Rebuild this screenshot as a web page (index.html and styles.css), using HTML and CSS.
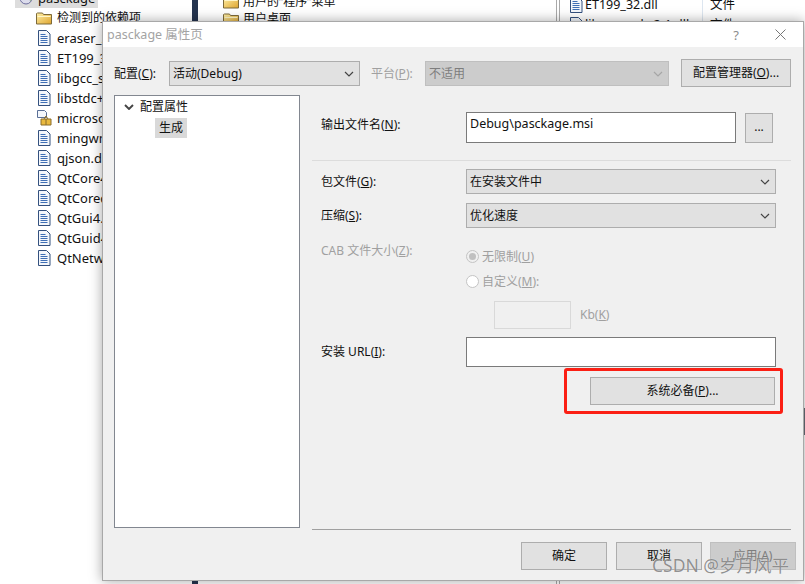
FILE: index.html
```html
<!DOCTYPE html>
<html lang="zh-CN">
<head>
<meta charset="utf-8">
<title>pasckage 属性页</title>
<link rel="stylesheet" href="styles.css">
</head>
<body>
<svg class="defs" width="0" height="0" aria-hidden="true">
  <defs>
    <linearGradient id="folderFill" x1="0" y1="0" x2="1" y2="1"><stop offset="0" stop-color="#fff0a8"/><stop offset="1" stop-color="#dfa52e"/></linearGradient>
    <symbol id="doc" viewBox="0 0 14 16">
      <path d="M1.5.5h8l3.5 3.5v11.500h-11.500z" fill="#f4f7fc" stroke="#33507e"/>
      <path d="M3.500 4.500h5M3.500 6.500h7M3.500 8.500h7M3.500 10.500h7M3.500 12.500h7" stroke="#3f6fb5" fill="none"/>
    </symbol>
    <symbol id="folder" viewBox="0 0 16 14">
      <path d="M.5 2.500v10.500h15v-9.500h-8l-1-1.500h-5z" fill="url(#folderFill)" stroke="#7d6a3a"/>
      <path d="M1.500 5.500h13" stroke="#fff6c9" fill="none"/>
    </symbol>
    <symbol id="chev" viewBox="0 0 10 6">
      <path d="M1 1l4 4 4-4" fill="none" stroke="currentColor"/>
    </symbol>
  </defs>
</svg>

<div class="win win-left">
  <div class="tree-top"><svg class="ic-pkg" viewBox="0 0 16 14"><circle cx="8" cy="7" r="6" fill="#dcdcec" stroke="#6d6d9c"/><path d="M8 7l5-3v6z" fill="#7fb36a"/></svg><span>pasckage</span></div>
  <div class="file folder-row"><svg class="ic-folder"><use href="#folder"/></svg><span>检测到的依赖项</span></div>
  <div class="file"><svg class="ic-doc"><use href="#doc"/></svg><span>eraser_2</span></div>
  <div class="file"><svg class="ic-doc"><use href="#doc"/></svg><span>ET199_32</span></div>
  <div class="file"><svg class="ic-doc"><use href="#doc"/></svg><span>libgcc_s_</span></div>
  <div class="file"><svg class="ic-doc"><use href="#doc"/></svg><span>libstdc++</span></div>
  <div class="file merge-row"><svg class="ic-merge" viewBox="0 0 16 16"><path d="M1.500.5h7l2 2v5h-9z" fill="#f4f7fc" stroke="#5a6f96"/><path d="M5 9h10v6H5z" fill="#e9b93f" stroke="#8a6d2a"/><path d="M8 9l2-3 2 3M10 9v6" fill="none" stroke="#8a6d2a"/></svg><span>microsoft</span></div>
  <div class="file"><svg class="ic-doc"><use href="#doc"/></svg><span>mingwm10</span></div>
  <div class="file"><svg class="ic-doc"><use href="#doc"/></svg><span>qjson.dll</span></div>
  <div class="file"><svg class="ic-doc"><use href="#doc"/></svg><span>QtCore4.dll</span></div>
  <div class="file"><svg class="ic-doc"><use href="#doc"/></svg><span>QtCored4</span></div>
  <div class="file"><svg class="ic-doc"><use href="#doc"/></svg><span>QtGui4.dll</span></div>
  <div class="file"><svg class="ic-doc"><use href="#doc"/></svg><span>QtGuid4</span></div>
  <div class="file"><svg class="ic-doc"><use href="#doc"/></svg><span>QtNetwork</span></div>
</div>

<div class="win win-mid">
  <div class="mid-row"><svg class="ic-folder"><use href="#folder"/></svg><span>用户的“程序”菜单</span></div>
  <div class="mid-row"><svg class="ic-folder"><use href="#folder"/></svg><span>用户桌面</span></div>
</div>

<div class="win win-right">
  <div class="right-row"><svg class="ic-doc"><use href="#doc"/></svg><span class="right-name">ET199_32.dll</span><span>文件</span></div>
  <div class="right-row"><svg class="ic-doc"><use href="#doc"/></svg><span class="right-name">libgcc_s_dw2-1.dll</span><span>文件</span></div>
</div>
<div class="edge-mark"></div>

<div class="dialog">
  <div class="titlebar">
    <span class="title-text">pasckage 属性页</span>
    <span class="title-help">?</span>
    <svg class="title-close" viewBox="0 0 11 11"><path d="M.5.5l10 10M10.500.5l-10 10" stroke="#777" fill="none"/></svg>
  </div>
  <div class="body">
    <div class="config-row">
      <span class="cfg-label">配置(<u>C</u>):</span>
      <div class="select cfg-select"><span>活动(Debug)</span><svg class="chev"><use href="#chev"/></svg></div>
      <span class="cfg-label platform disabled">平台(<u>P</u>):</span>
      <div class="select plat-select is-disabled"><span>不适用</span><svg class="chev"><use href="#chev"/></svg></div>
      <div class="btn cfg-btn">配置管理器(<u>O</u>)...</div>
    </div>
    <div class="main">
      <div class="tree">
        <div class="tree-root"><svg class="tree-chev"><use href="#chev"/></svg><span>配置属性</span></div>
        <div class="tree-child"><span>生成</span></div>
      </div>
      <div class="panel">
        <div class="output">
          <span class="label out-label">输出文件名(<u>N</u>):</span>
          <div class="input out-input">Debug\pasckage.msi</div>
          <div class="btn browse">...</div>
        </div>
        <div class="form">
          <span class="label">包文件(<u>G</u>):</span>
          <div class="select"><span>在安装文件中</span><svg class="chev"><use href="#chev"/></svg></div>
          <span class="label">压缩(<u>S</u>):</span>
          <div class="select"><span>优化速度</span><svg class="chev"><use href="#chev"/></svg></div>
          <span class="label cab disabled">CAB 文件大小(<u>Z</u>):</span>
          <div class="cab-options disabled">
            <div class="radio-row"><span class="radio checked"></span><span>无限制(<u>U</u>)</span></div>
            <div class="radio-row"><span class="radio"></span><span>自定义(<u>M</u>):</span></div>
            <div class="size-row"><div class="size-input"></div><span>Kb(<u>K</u>)</span></div>
          </div>
          <span class="label url-label">安装 URL(<u>I</u>):</span>
          <div class="input url-input"></div>
          <div class="prereq-wrap">
            <div class="btn prereq">系统必备(<u>P</u>)...</div>
            <div class="highlight"></div>
          </div>
        </div>
      </div>
    </div>
    <div class="footer">
      <div class="btn foot-btn">确定</div>
      <div class="btn foot-btn">取消</div>
      <div class="btn foot-btn is-disabled">应用(<u>A</u>)</div>
    </div>
  </div>
</div>
<div class="watermark">CSDN @岁月风平</div>
</body>
</html>
```

FILE: styles.css
```css
* { box-sizing: border-box; }
html, body { margin: 0; height: 100%; }
body {
  position: relative;
  width: 805px;
  height: 584px;
  overflow: hidden;
  background: #fff;
  color: #111;
  font: 12px/16px "Noto Sans", "Noto Sans CJK SC", sans-serif;
}
u { text-underline-offset: 1px; }
.defs { position: absolute; }
.ic-doc { width: 14px; height: 16px; flex: none; }
.ic-folder { width: 16px; height: 14px; flex: none; }
.ic-merge { width: 16px; height: 16px; flex: none; }
.ic-pkg { width: 16px; height: 14px; flex: none; }

/* background windows */
.win { position: absolute; }
.win-left { left: 0; top: -12px; width: 192px; height: 596px; background: #fff; font-size: 13px; }
.tree-top {
  display: flex; align-items: center; gap: 4px;
  margin-left: 15px; width: 83px; height: 20px; padding-left: 3px;
  background: #ddd;
}
.file { display: flex; align-items: center; gap: 6px; height: 20px; padding-left: 37px; }
.file span { white-space: nowrap; }
.folder-row { padding-left: 36px; gap: 5px; font-size: 12px; }
.merge-row { padding-left: 36px; gap: 5px; }
.win-mid {
  left: 192px; top: -7px; width: 368px; height: 600px;
  padding-left: 25px; background: #fff;
  border-left: 6px solid #25344f;
  border-right: 4px double #a9a9a9;
  font-size: 12px;
}
.mid-row { display: flex; align-items: center; gap: 4px; height: 17px; }
.win-right { left: 560px; top: -5px; width: 245px; height: 600px; padding-left: 9px; background: #fff; }
.right-row { display: flex; align-items: center; height: 20px; font-size: 12.500px; }
.right-row .ic-doc { margin-right: 2px; }
.right-name { width: 124px; height: 100%; line-height: 20px; margin-right: 0; border-right: 1px solid #dde6f0; margin-right: 7px; width: 118px; }
.edge-mark { position: absolute; left: 804px; top: 408px; width: 1px; height: 27px; background: #6a6f78; }

/* dialog */
.dialog {
  position: absolute; left: 102px; top: 21px;
  width: 702px; height: 560px;
  display: flex; flex-direction: column;
  background: #f0f0f0;
  border: 1px solid #a8a8a8;
  box-shadow: 0 0 12px rgba(0, 0, 0, .35);
}
.titlebar {
  display: flex; align-items: center; flex: none;
  height: 25px; padding: 0 17px 0 4px;
  background: #fff;
}
.title-text { flex: 1; color: #a3a3a3; font-size: 12.500px; }
.title-help { color: #8b8b8b; font-size: 13px; margin-right: 36px; }
.title-close { width: 11px; height: 11px; }
.body { flex: 1; display: flex; flex-direction: column; padding: 12px 7px 0 11px; }

.select, .btn, .input { display: flex; align-items: center; }
.select {
  height: 25px; padding: 0 5px 0 3px;
  justify-content: space-between;
  background: #e1e1e1; border: 1px solid #adadad;
}
.select span { padding-top: 1px; }
.chev { width: 10px; height: 6px; color: #444; stroke-width: 1.200; }
.btn {
  justify-content: center;
  background: #e1e1e1; border: 1px solid #adadad;
}
.is-disabled { background: #ccc; border-color: #bfbfbf; color: #7d7d7d; }
.is-disabled .chev { color: #a6a6a6; }
.disabled { color: #a0a0a0; }

.config-row { display: flex; align-items: center; height: 28px; padding-right: 5px; }
.cfg-label { width: 55px; flex: none; padding-top: 1px; }
.cfg-select { width: 191px; margin-top: 1px; }
.platform { width: 54px; margin-left: 11px; }
.plat-select { width: 244px; margin-top: 1px; }
.cfg-btn { width: 110px; height: 28px; margin-left: 12px; }

.main { display: flex; gap: 12px; margin-top: 8px; height: 435px; }
.tree {
  width: 186px; height: 433px; flex: none;
  padding-top: 2px;
  background: #fff; border: 1px solid #828790;
}
.tree-root { display: flex; align-items: center; height: 18px; margin-bottom: 2px; padding-left: 9px; }
.tree-chev { width: 10px; height: 6px; margin-right: 6px; color: #444; stroke-width: 1.900; }
.tree-child { height: 20px; padding-left: 40px; }
.tree-child span { display: block; width: 32px; height: 20px; line-height: 20px; text-align: center; background: #d9d9d9; }

.panel { width: 479px; margin-right: -5px; border-bottom: 1px solid #a0a0a0; }
.output {
  display: flex; align-items: flex-start;
  height: 66px; padding: 17px 0 0 9px;
  border-bottom: 1px solid #dcdcdc;
}
.out-label { width: 145px; flex: none; padding-top: 5px; }
.input { background: #fff; border: 1px solid #7a7a7a; }
.out-input { width: 270px; height: 31px; align-items: flex-start; padding: 3px 3px; font-size: 12.500px; }
.browse { width: 28px; height: 30px; margin: 1px 0 0 9px; padding-bottom: 2px; }

.form {
  display: grid;
  grid-template-columns: 145px 310px;
  row-gap: 9px;
  align-items: center;
  padding: 8px 0 0 9px;
}
.cab { align-self: start; padding-top: 6px; }
.cab-options { display: flex; flex-direction: column; margin-top: 7px; }
.radio-row { display: flex; align-items: center; gap: 3px; height: 25px; }
.radio {
  position: relative; width: 13px; height: 13px; flex: none;
  border: 1px solid #c4c4c4; border-radius: 50%; background: #fff;
}
.radio.checked { background: #f0f0f0; }
.radio.checked::after {
  content: ""; position: absolute; left: 2px; top: 2px;
  width: 7px; height: 7px; border-radius: 50%; background: #c0c0c0;
}
.size-row { display: flex; align-items: center; gap: 9px; margin-left: 28px; padding-top: 7px; }
.size-input { width: 77px; height: 28px; border: 1px solid #d9d9d9; background: #f0f0f0; }
.url-input { height: 30px; margin-top: -1px; }
.url-label { padding-bottom: 1px; }
.label { white-space: nowrap; }
.prereq-wrap { grid-column: 2; position: relative; margin-left: 124px; width: 185px; margin-top: 1px; }
.prereq { height: 28px; width: 185px; }
.highlight {
  position: absolute; left: -26px; top: -9px;
  width: 219px; height: 46px;
  border: 3px solid #fb1f14; border-radius: 3px;
}

.footer { display: flex; justify-content: flex-end; gap: 9px; margin-top: 12px; }
.foot-btn { width: 86px; height: 28px; }
.foot-btn + .foot-btn + .foot-btn { margin-left: -1px; }

.watermark {
  position: absolute; left: 652px; top: 555px;
  color: rgba(110, 110, 110, .75);
  font-size: 17.500px; line-height: 20px; white-space: nowrap;
  text-shadow: 0 0 1px rgba(255, 255, 255, .8);
}
```
